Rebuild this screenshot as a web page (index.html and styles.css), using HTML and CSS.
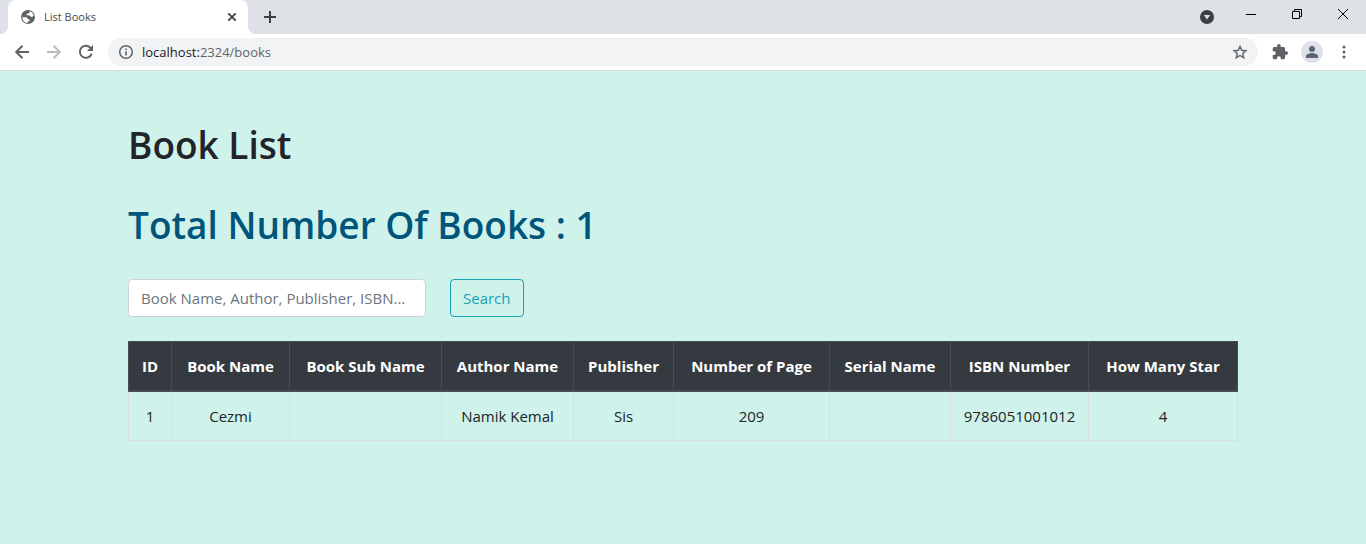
FILE: index.html
```html
<!DOCTYPE html>
<html lang="en">
<head>
<meta charset="utf-8">
<meta name="viewport" content="width=device-width, initial-scale=1">
<title>List Books</title>
<link rel="stylesheet" href="styles.css">
</head>
<body>
<header class="browser">
  <div class="tab-strip">
    <div class="tab">
      <svg class="favicon" width="16" height="16" viewBox="0 0 16 16" aria-hidden="true"><circle cx="8" cy="8" r="7" fill="#5f6368"/><path d="M2.200 8.300h3.600c1.500 0 1.900.9 1.900 1.900h1.700v2.200H7.500v1.700C4.600 14 2.400 11.600 2.200 8.300zM9.700 2.200v.7c0 .9-.7 1.500-1.500 1.500H6.800v1.800H8.500c2 0 2 1.900 3.200 1.900s.9-1 2.100-1C13.600 4.700 12 2.800 9.700 2.200z" fill="#fff"/></svg>
      <span class="tab-title">List Books</span>
      <button class="icon-button tab-close" aria-label="Close tab"><svg width="16" height="16" viewBox="0 0 16 16"><path d="M4.300 4.300l7.400 7.400M11.700 4.300l-7.400 7.400" stroke="#3c4043" stroke-width="1.800"/></svg></button>
    </div>
    <button class="icon-button new-tab" aria-label="New tab"><svg width="16" height="16" viewBox="0 0 16 16"><path d="M8 2v12M2 8h12" stroke="#3c4043" stroke-width="2"/></svg></button>
    <div class="window-controls">
      <button class="icon-button media" aria-label="Tab search"><svg width="16" height="16" viewBox="0 0 16 16"><circle cx="8" cy="8" r="7" fill="#3c4043"/><path d="M4.800 6h6.400L8 10.500z" fill="#dee1e6"/></svg></button>
      <button class="icon-button window-button" aria-label="Minimize"><svg width="12" height="12" viewBox="0 0 12 12"><path d="M1 6.500h10" stroke="#000"/></svg></button>
      <button class="icon-button window-button" aria-label="Restore"><svg width="12" height="12" viewBox="0 0 12 12" fill="none" stroke="#000"><path d="M1.500 3.500h7v7h-7zM3.500 3.500v-2h7v7h-2"/></svg></button>
      <button class="icon-button window-button" aria-label="Close"><svg width="12" height="12" viewBox="0 0 12 12"><path d="M1 1l10 10M11 1L1 11" stroke="#000"/></svg></button>
    </div>
  </div>
  <div class="toolbar">
    <button class="icon-button nav-button" aria-label="Back"><svg width="16" height="16" viewBox="0 0 16 16" fill="none" stroke="#5f6368" stroke-width="2"><path d="M15 8H2.500M8.500 1.700L2.200 8l6.300 6.300"/></svg></button>
    <button class="icon-button nav-button" aria-label="Forward"><svg width="16" height="16" viewBox="0 0 16 16" fill="none" stroke="#babcbe" stroke-width="2"><path d="M1 8h12.500M7.500 1.700L13.800 8l-6.300 6.300"/></svg></button>
    <button class="icon-button nav-button" aria-label="Reload"><svg width="16" height="16" viewBox="0 0 16 16"><path d="M13.600 9.600A6 6 0 1 1 12.300 3.800L13.400 5" fill="none" stroke="#5f6368" stroke-width="2"/><path d="M15 1v6H9z" fill="#5f6368"/></svg></button>
    <div class="address">
      <svg width="16" height="16" viewBox="0 0 16 16" aria-hidden="true"><circle cx="8" cy="8" r="6.300" fill="none" stroke="#5f6368" stroke-width="1.500"/><path d="M7.200 4.400h1.600v1.600H7.200zM7.200 7.200h1.600v4.400H7.200z" fill="#5f6368"/></svg>
      <span class="url"><span class="host">localhost:</span>2324/books</span>
      <button class="icon-button star" aria-label="Bookmark this page"><svg width="16" height="16" viewBox="0 0 16 16"><path d="M8 2.400l1.700 3.900 4.200.4-3.200 2.800 1 4.200L8 11.500l-3.700 2.200 1-4.200-3.200-2.800 4.200-.4z" fill="none" stroke="#5f6368" stroke-width="1.400"/></svg></button>
    </div>
    <button class="icon-button extensions" aria-label="Extensions"><svg width="16" height="16" viewBox="1 1 22 22"><path fill="#5f6368" d="M20.500 11H19V7c0-1.100-.9-2-2-2h-4V3.500a2.500 2.500 0 0 0-5 0V5H4c-1.100 0-2 .9-2 2v3.800h1.500a2.700 2.700 0 0 1 0 5.400H2V20c0 1.100.9 2 2 2h3.800v-1.500a2.700 2.700 0 0 1 5.400 0V22H17c1.100 0 2-.9 2-2v-4h1.500a2.500 2.500 0 0 0 0-5z"/></svg></button>
    <button class="icon-button profile" aria-label="Profile"><svg width="14" height="14" viewBox="0 0 14 14" fill="#5a6578"><circle cx="7" cy="4" r="3"/><path d="M1 13v-2c0-2 4-3 6-3s6 1 6 3v2z"/></svg></button>
    <button class="icon-button menu" aria-label="Menu"><svg width="16" height="16" viewBox="0 0 16 16" fill="#5f6368"><circle cx="8" cy="3" r="1.500"/><circle cx="8" cy="8" r="1.500"/><circle cx="8" cy="13" r="1.500"/></svg></button>
  </div>
</header>
<main class="container">
  <h1 class="title">Book List</h1>
  <h1 class="title total">Total Number Of Books : 1</h1>
  <form class="search">
    <input class="search-input" type="text" aria-label="Search books" placeholder="Book Name, Author, Publisher, ISBN...">
    <button class="search-button" type="submit">Search</button>
  </form>
  <table class="books">
    <colgroup>
      <col class="col-id"><col class="col-name"><col class="col-sub"><col class="col-author"><col class="col-publisher"><col class="col-pages"><col class="col-serial"><col class="col-isbn"><col class="col-star">
    </colgroup>
    <thead>
      <tr><th>ID</th><th>Book Name</th><th>Book Sub Name</th><th>Author Name</th><th>Publisher</th><th>Number of Page</th><th>Serial Name</th><th>ISBN Number</th><th>How Many Star</th></tr>
    </thead>
    <tbody>
      <tr><td>1</td><td>Cezmi</td><td></td><td>Namik Kemal</td><td>Sis</td><td>209</td><td></td><td>9786051001012</td><td>4</td></tr>
    </tbody>
  </table>
</main>
</body>
</html>
```
FILE: styles.css
```css
* {
  box-sizing: border-box;
}

body {
  margin: 0;
  min-height: 100vh;
  background: #cff2eb;
  color: #212529;
  font-family: "Open Sans", "Noto Sans", sans-serif;
  font-size: 15px;
  line-height: 24px;
}

.browser {
  background: #fff;
  border-bottom: 1px solid #d9dcde;
}

.icon-button {
  display: flex;
  flex: none;
  align-items: center;
  justify-content: center;
  padding: 0;
  border: 0;
  background: none;
}

.tab-strip {
  display: flex;
  height: 34px;
  padding-left: 8px;
  background: #dee1e6;
}

.tab {
  position: relative;
  display: flex;
  align-items: center;
  width: 240px;
  padding: 0 8px 0 12px;
  border-radius: 8px 8px 0 0;
  background: #fff;
}

.tab::before,
.tab::after {
  content: "";
  position: absolute;
  bottom: 0;
  width: 8px;
  height: 8px;
}

.tab::before {
  right: 100%;
  background: radial-gradient(circle at 0 0, #dee1e6 8px, #fff 8px);
}

.tab::after {
  left: 100%;
  background: radial-gradient(circle at 100% 0, #dee1e6 8px, #fff 8px);
}

.tab-title {
  flex: 1;
  margin-left: 8px;
  color: #45494d;
  font-size: 11px;
}

.new-tab {
  width: 28px;
  margin-left: 8px;
}

.window-controls {
  display: flex;
  margin-left: auto;
}

.media {
  width: 28px;
  margin-right: 7px;
}

.window-button {
  width: 46px;
  height: 28px;
}

.toolbar {
  display: flex;
  align-items: center;
  height: 36px;
  padding: 0 14px 0 6px;
}

.nav-button {
  width: 32px;
  height: 32px;
}

.address {
  display: flex;
  flex: 1;
  align-items: center;
  height: 28px;
  margin-left: 6px;
  padding: 0 10px;
  border-radius: 14px;
  background: #f1f3f4;
}

.url {
  flex: 1;
  margin-left: 8px;
  color: #5f6368;
  font-size: 13px;
}

.host {
  color: #202124;
}

.extensions {
  width: 20px;
  margin-left: 12px;
}

.profile {
  width: 22px;
  height: 22px;
  margin-left: 11px;
  border-radius: 50%;
  background: #dee1e6;
}

.menu {
  width: 16px;
  margin-left: 13px;
}

.container {
  max-width: 1140px;
  margin: 0 auto;
  padding: 50px 15px;
}

.title {
  margin: 0 0 32px;
  font-size: 37px;
  font-weight: 600;
  line-height: 48px;
}

.total {
  margin-bottom: 30px;
  color: #00567a;
}

.search {
  display: flex;
  gap: 24px;
  margin-bottom: 24px;
}

.search-input {
  width: 298px;
  height: 38px;
  padding: 6px 12px;
  border: 1px solid #ced4da;
  border-radius: 4px;
  background: #fff;
  color: #495057;
  font: inherit;
}

.search-input::placeholder {
  color: #6c757d;
  opacity: 1;
}

.search-button {
  height: 38px;
  padding: 0 12px;
  border: 1px solid #17a2b8;
  border-radius: 4px;
  background: transparent;
  color: #17a2b8;
  font: inherit;
}

.books {
  width: 100%;
  table-layout: fixed;
  border-collapse: collapse;
  border: 1px solid #dee2e6;
  text-align: center;
}

.books th,
.books td {
  padding: 12px 0;
  border: 1px solid #dbdfe3;
  white-space: nowrap;
}

.books td {
  height: 49px;
}

.books th {
  border-color: #454d55;
  border-bottom-width: 2px;
  background: #343a40;
  color: #fff;
  font-weight: 700;
}

.col-id { width: 43px; }
.col-name { width: 118px; }
.col-sub { width: 152px; }
.col-author { width: 132px; }
.col-publisher { width: 100px; }
.col-pages { width: 156px; }
.col-serial { width: 121px; }
.col-isbn { width: 138px; }
.col-star { width: 149px; }
```
